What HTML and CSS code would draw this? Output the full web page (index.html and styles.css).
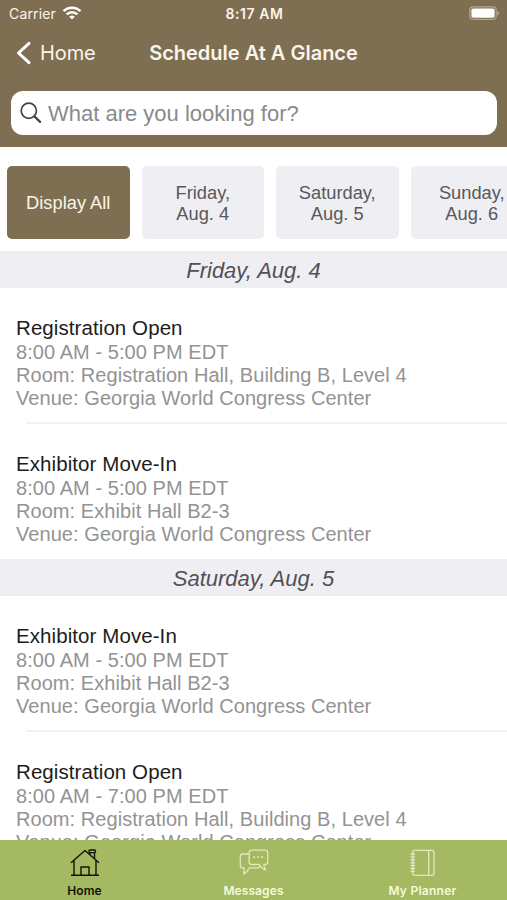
FILE: index.html
```html
<!DOCTYPE html>
<html lang="en">
<head>
<meta charset="utf-8">
<title>Schedule At A Glance</title>
<link rel="stylesheet" href="styles.css">
</head>
<body>
<div class="app">
  <header class="header">
    <div class="status">
      <div class="carrier"><span class="carrier-name">Carrier</span>
        <svg class="wifi" width="20" height="15" viewBox="0 0 20 15" fill="none" stroke="#fff" stroke-width="2.5"><path d="M1.500 5.200a12.100 12.100 0 0 1 17 0M4.600 8.400a7.700 7.700 0 0 1 10.800 0"/><path d="M7.200 10.700a4.100 4.100 0 0 1 5.600 0L10 13.600z" fill="#fff" stroke="none"/></svg>
      </div>
      <span class="time">8:17 AM</span>
      <svg class="battery" width="31" height="15" viewBox="0 0 31 15"><rect x=".8" y=".8" width="26.4" height="12.6" rx="3.5" fill="none" stroke="#b3a78f" stroke-width="1.2"/><rect x="2.4" y="2.4" width="23.2" height="9.4" rx="1.8" fill="#fff"/><path d="M28.3 5v4.4q1.8-.8 1.800-2.200T28.300 5z" fill="#b3a78f"/></svg>
    </div>
    <nav class="nav">
      <a class="back"><svg width="16" height="24" viewBox="0 0 16 24" fill="none" stroke="#fff" stroke-width="3" stroke-linecap="round" stroke-linejoin="round"><path d="M13 2.300 2.500 12l10.500 9.700"/></svg><span class="back-label">Home</span></a>
      <h1 class="title">Schedule At A Glance</h1>
      <span></span>
    </nav>
    <div class="search">
      <svg width="22" height="22" viewBox="0 0 22 22" fill="none" stroke="#444" stroke-width="1.7" stroke-linecap="round"><circle cx="8.8" cy="8.8" r="7.6"/><path d="m14.400 14.400 5.700 5.500" stroke-width="2.2"/></svg>
      <span class="placeholder">What are you looking for?</span>
    </div>
  </header>
  <div class="days">
    <div class="day active"><span>Display All</span></div>
    <div class="day"><span>Friday,<br>Aug. 4</span></div>
    <div class="day"><span>Saturday,<br>Aug. 5</span></div>
    <div class="day"><span>Sunday,<br>Aug. 6</span></div>
  </div>
  <main class="list">
    <h2 class="section">Friday, Aug. 4</h2>
    <article class="item divided"><h3>Registration Open</h3><p>8:00 AM - 5:00 PM EDT</p><p>Room: Registration Hall, Building B, Level 4</p><p>Venue: Georgia World Congress Center</p></article>
    <article class="item last"><h3>Exhibitor Move-In</h3><p>8:00 AM - 5:00 PM EDT</p><p>Room: Exhibit Hall B2-3</p><p>Venue: Georgia World Congress Center</p></article>
    <h2 class="section">Saturday, Aug. 5</h2>
    <article class="item divided"><h3>Exhibitor Move-In</h3><p>8:00 AM - 5:00 PM EDT</p><p>Room: Exhibit Hall B2-3</p><p>Venue: Georgia World Congress Center</p></article>
    <article class="item"><h3>Registration Open</h3><p>8:00 AM - 7:00 PM EDT</p><p>Room: Registration Hall, Building B, Level 4</p><p>Venue: Georgia World Congress Center</p></article>
  </main>
  <footer class="tabs">
    <a class="tab current"><svg width="32" height="30" viewBox="0 0 32 30" fill="none" stroke="currentColor" stroke-width="1.4" stroke-linejoin="round"><path d="M2 14.700 16 2.500l14 12.200M5 12.300v14.900M27 12.300v14.900M2 27.200h28M12 27v-8h8v8M21 6.500V4.600M25.500 10.500V4.600"/><rect x="20" y="2" width="6.500" height="2.600" rx="1"/></svg><span>Home</span></a>
    <a class="tab"><svg width="32" height="30" viewBox="0 0 32 30" fill="none" stroke="currentColor" stroke-width="1.3" stroke-linejoin="round"><path d="M13.600 2.200h13.600q2.500 0 2.500 2.500V14q0 2.500-2.500 2.500h-1.400q.2 3.400 1.800 5.400-4-1-6.200-5.400h-7.800q-2.500 0-2.500-2.500V4.700q0-2.500 2.500-2.500zM11 6H4.500Q2.300 6 2.300 8.400v9q0 2.500 2.500 2.500H6q.4 3.400-.2 6.200 3.700-1.800 5.300-6.200h8.600q1.800 0 2.300-2.100"/><path d="M15.200 9.200H17M19.200 9.200H21M23.200 9.200H25" stroke-width="1.800"/></svg><span>Messages</span></a>
    <a class="tab"><svg width="32" height="30" viewBox="0 0 32 30" fill="none" stroke="currentColor" stroke-width="1.3"><rect x="5.800" y="2.300" width="21.200" height="25" rx="2"/><path d="M21.700 2.300v25"/><path d="M3.500 6H8M3.500 8.900H8M3.500 11.800H8M3.500 14.700H8M3.500 17.600H8M3.500 20.500H8M3.500 23.400H8" stroke-width="1.400"/></svg><span class="planner">My Planner</span></a>
  </footer>
</div>
</body>
</html>
```
FILE: styles.css
```css
* { box-sizing: border-box; }
body { margin: 0; background: #fff; font-family: "Liberation Sans", Arial, sans-serif; }
h1, h2, h3, p { margin: 0; font-weight: 400; }
svg { display: block; flex: none; }
.app { width: 507px; height: 900px; display: flex; flex-direction: column; overflow: hidden; }
.header { flex: none; height: 147px; background: #7f6f52; color: #fbf4ea; font-family: Inter, sans-serif; }
.status { height: 27px; padding: 0 7px 0 9px; display: grid; grid-template-columns: 1fr auto 1fr; align-items: center; font-size: 14px; }
.carrier { display: flex; align-items: center; gap: 6px; }
.carrier-name { letter-spacing: .15px; }
.time { font-weight: 600; font-size: 14px; letter-spacing: .6px; }
.battery { justify-self: end; }
.nav { height: 50px; padding: 1px 16px 0; display: grid; grid-template-columns: 1fr auto 1fr; align-items: center; }
.back { display: flex; align-items: center; gap: 8px; font-size: 20px; letter-spacing: -.1px; }
.title { font-size: 20px; font-weight: 600; }
.search { height: 44px; margin: 14px 10px 0 11px; padding-left: 9px; border-radius: 12px; background: #fff; display: flex; align-items: center; gap: 6px; color: #8a8a8e; font-family: "Liberation Sans", Arial, sans-serif; font-size: 22px; }
.placeholder { padding-top: 2px; }
.days { flex: none; height: 104px; padding: 19px 0 12px 7px; display: flex; gap: 12px; overflow: hidden; }
.day { flex: none; width: 122.500px; height: 73px; border-radius: 5px; background: #efeef3; color: #58585a; display: flex; align-items: center; justify-content: center; text-align: center; font-size: 18.300px; line-height: 21px; }
.active { background: #7f6f52; color: #fbf4ea; }
.list { flex: 1; min-height: 0; overflow: hidden; }
.section { height: 37px; background: #efeef3; color: #515153; font-size: 22px; line-height: 39px; font-style: italic; text-align: center; }
.item { position: relative; height: 136px; padding: 27px 0 0 16px; white-space: nowrap; }
.last { height: 135px; }
.item h3 { font-size: 20.500px; line-height: 26px; color: #1c1c1c; letter-spacing: .08px; }
.item p { font-size: 20px; line-height: 23px; color: #939393; letter-spacing: .06px; }
.divided::after { content: ""; position: absolute; left: 26px; right: 0; bottom: 0; height: 2px; background: #f1f1f2; }
.tabs { flex: none; height: 60px; background: #a4b962; display: grid; grid-template-columns: repeat(3, 1fr); font-family: Inter, sans-serif; font-size: 12px; font-weight: 600; letter-spacing: .1px; }
.tab { display: flex; flex-direction: column; align-items: center; padding-top: 8px; color: #f4f9dc; }
.tab svg { opacity: .75; }
.tab span { line-height: 16px; margin-top: 5px; }
.tab .planner { letter-spacing: .25px; }
.current { color: #10150a; }
.current svg { opacity: 1; }
```
